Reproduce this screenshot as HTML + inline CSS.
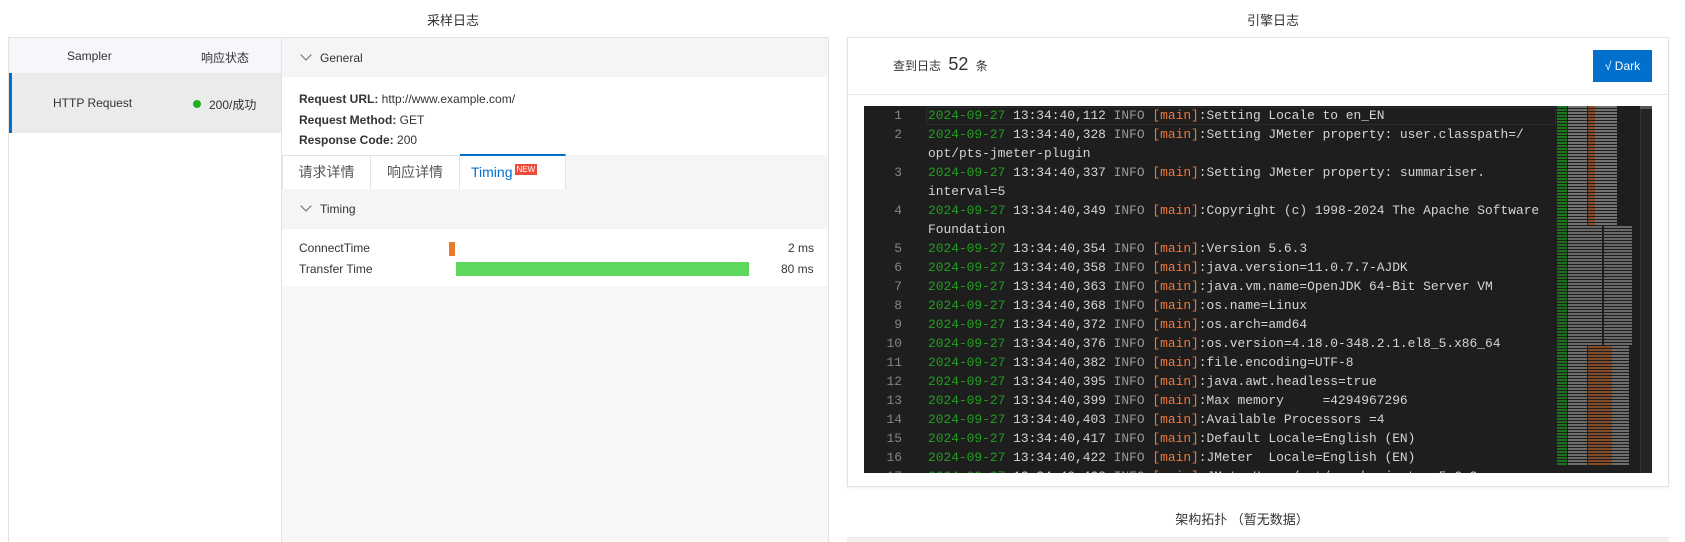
<!DOCTYPE html>
<html style="height:542px;overflow:hidden"><head><meta charset="utf-8"><style>
*{box-sizing:border-box;margin:0;padding:0}
body{width:1685px;height:542px;background:#fff;font-family:"Liberation Sans","Noto Sans CJK SC",sans-serif;font-size:12px;color:#333;position:relative;overflow:hidden}
.abs{position:absolute}
.title{font-size:13px;color:#333;transform:translateX(-50%);top:10px}
.mono{font-family:"Liberation Mono",monospace;font-size:12.9px}
.row{height:19px;line-height:19px;white-space:pre;position:relative}
.ln{position:absolute;left:0;width:38px;text-align:right;color:#858585}
.tx{position:absolute;left:64px;color:#d4d4d4}
.d{color:#1fa01f}.i{color:#9a9a9a}.m{color:#f0793a}
.chev{display:inline-block;width:8px;height:8px;border-right:1.3px solid #666;border-bottom:1.3px solid #666;transform:rotate(45deg);margin-right:10px;position:relative;top:-3px}
</style></head><body>
<div class="abs title" style="left:453px">采样日志</div>
<div class="abs title" style="left:1273px">引擎日志</div>

<div class="abs" style="left:8px;top:37px;width:821px;height:505px;border:1px solid #e3e3e3;border-bottom:none;background:#fff"></div>
<div class="abs" style="left:9px;top:38px;width:272px;height:35px;background:#f5f7fa"></div>
<div class="abs" style="left:67px;top:49px">Sampler</div>
<div class="abs" style="left:201px;top:49px">响应状态</div>
<div class="abs" style="left:9px;top:73px;width:272px;height:60px;background:#ebebeb;border-left:3px solid #0070cc"></div>
<div class="abs" style="left:53px;top:96px">HTTP Request</div>
<div class="abs" style="left:193px;top:100px;width:8px;height:8px;border-radius:50%;background:#1db11d"></div>
<div class="abs" style="left:209px;top:96px">200/成功</div>
<div class="abs" style="left:281px;top:38px;width:1px;height:504px;background:#e3e3e3"></div>

<div class="abs" style="left:282px;top:38px;width:546px;height:39px;background:#f5f5f5"></div>
<div class="abs" style="left:302px;top:51px"><span class="chev"></span>General</div>
<div class="abs" style="left:299px;top:89px;line-height:20.5px"><b>Request URL:</b> http://www.example.com/<br><b>Request Method:</b> GET<br><b>Response Code:</b> 200</div>
<div class="abs" style="left:282px;top:155px;width:546px;height:34px;background:#f5f5f5"></div>
<div class="abs" style="left:282px;top:155px;width:89px;height:34px;background:#fff;border:1px solid #e3e3e3;border-bottom:none;font-size:14px;text-align:center;line-height:32px;color:#555">请求详情</div>
<div class="abs" style="left:371px;top:155px;width:89px;height:34px;background:#fff;border:1px solid #e3e3e3;border-left:none;border-bottom:none;font-size:14px;text-align:center;line-height:32px;color:#555">响应详情</div>
<div class="abs" style="left:460px;top:154px;width:106px;height:35px;background:#fff;border-top:2px solid #0070cc;border-right:1px solid #e3e3e3;font-size:14px;line-height:32px;color:#0070cc;padding-left:11px">Timing<span style="background:#f04a3a;color:#fff;font-size:8px;padding:1px 2px;position:relative;top:-5px;margin-left:2px">NEW</span></div>
<div class="abs" style="left:282px;top:189px;width:546px;height:40px;background:#f5f5f5"></div>
<div class="abs" style="left:302px;top:202px"><span class="chev"></span>Timing</div>
<div class="abs" style="left:299px;top:241px">ConnectTime</div>
<div class="abs" style="left:299px;top:262px">Transfer Time</div>
<div class="abs" style="left:449px;top:242px;width:6px;height:14px;background:#e87b2a"></div>
<div class="abs" style="left:456px;top:262px;width:293px;height:14px;background:#5cd85c"></div>
<div class="abs" style="left:788px;top:241px">2 ms</div>
<div class="abs" style="left:781px;top:262px">80 ms</div>
<div class="abs" style="left:282px;top:286px;width:546px;height:256px;background:#f7f7f7"></div>

<div class="abs" style="left:847px;top:37px;width:822px;height:450px;border:1px solid #e3e3e3;background:#fff;box-shadow:0 1px 3px rgba(0,0,0,.06)"></div>
<div class="abs" style="left:848px;top:94px;width:820px;height:1px;background:#e6e6e6"></div>
<div class="abs" style="left:893px;top:54px;font-size:12px">查到日志 <span style="font-size:18px;margin:0 4px">52</span> 条</div>
<div class="abs" style="left:1593px;top:50px;width:59px;height:32px;background:#0070cc;color:#fff;line-height:32px;text-align:center;font-size:12px">√ Dark</div>

<div class="abs mono" style="left:864px;top:106px;width:788px;height:367px;background:#1e1e1e;overflow:hidden">
<div style="position:absolute;left:62px;top:1px;width:630px;height:18px;border:1px solid #2c2c2c"></div>
<div>
<div class="row"><span class="ln">1</span><span class="tx"><span class="d">2024-09-27</span> 13:34:40,112 <span class="i">INFO</span> <span class="m">[main]</span>:Setting Locale to en_EN</span></div>
<div class="row"><span class="ln">2</span><span class="tx"><span class="d">2024-09-27</span> 13:34:40,328 <span class="i">INFO</span> <span class="m">[main]</span>:Setting JMeter property: user.classpath=/</span></div>
<div class="row"><span class="tx">opt/pts-jmeter-plugin</span></div>
<div class="row"><span class="ln">3</span><span class="tx"><span class="d">2024-09-27</span> 13:34:40,337 <span class="i">INFO</span> <span class="m">[main]</span>:Setting JMeter property: summariser.</span></div>
<div class="row"><span class="tx">interval=5</span></div>
<div class="row"><span class="ln">4</span><span class="tx"><span class="d">2024-09-27</span> 13:34:40,349 <span class="i">INFO</span> <span class="m">[main]</span>:Copyright (c) 1998-2024 The Apache Software</span></div>
<div class="row"><span class="tx">Foundation</span></div>
<div class="row"><span class="ln">5</span><span class="tx"><span class="d">2024-09-27</span> 13:34:40,354 <span class="i">INFO</span> <span class="m">[main]</span>:Version 5.6.3</span></div>
<div class="row"><span class="ln">6</span><span class="tx"><span class="d">2024-09-27</span> 13:34:40,358 <span class="i">INFO</span> <span class="m">[main]</span>:java.version=11.0.7.7-AJDK</span></div>
<div class="row"><span class="ln">7</span><span class="tx"><span class="d">2024-09-27</span> 13:34:40,363 <span class="i">INFO</span> <span class="m">[main]</span>:java.vm.name=OpenJDK 64-Bit Server VM</span></div>
<div class="row"><span class="ln">8</span><span class="tx"><span class="d">2024-09-27</span> 13:34:40,368 <span class="i">INFO</span> <span class="m">[main]</span>:os.name=Linux</span></div>
<div class="row"><span class="ln">9</span><span class="tx"><span class="d">2024-09-27</span> 13:34:40,372 <span class="i">INFO</span> <span class="m">[main]</span>:os.arch=amd64</span></div>
<div class="row"><span class="ln">10</span><span class="tx"><span class="d">2024-09-27</span> 13:34:40,376 <span class="i">INFO</span> <span class="m">[main]</span>:os.version=4.18.0-348.2.1.el8_5.x86_64</span></div>
<div class="row"><span class="ln">11</span><span class="tx"><span class="d">2024-09-27</span> 13:34:40,382 <span class="i">INFO</span> <span class="m">[main]</span>:file.encoding=UTF-8</span></div>
<div class="row"><span class="ln">12</span><span class="tx"><span class="d">2024-09-27</span> 13:34:40,395 <span class="i">INFO</span> <span class="m">[main]</span>:java.awt.headless=true</span></div>
<div class="row"><span class="ln">13</span><span class="tx"><span class="d">2024-09-27</span> 13:34:40,399 <span class="i">INFO</span> <span class="m">[main]</span>:Max memory     =4294967296</span></div>
<div class="row"><span class="ln">14</span><span class="tx"><span class="d">2024-09-27</span> 13:34:40,403 <span class="i">INFO</span> <span class="m">[main]</span>:Available Processors =4</span></div>
<div class="row"><span class="ln">15</span><span class="tx"><span class="d">2024-09-27</span> 13:34:40,417 <span class="i">INFO</span> <span class="m">[main]</span>:Default Locale=English (EN)</span></div>
<div class="row"><span class="ln">16</span><span class="tx"><span class="d">2024-09-27</span> 13:34:40,422 <span class="i">INFO</span> <span class="m">[main]</span>:JMeter  Locale=English (EN)</span></div>
<div class="row"><span class="ln">17</span><span class="tx"><span class="d">2024-09-27</span> 13:34:40,428 <span class="i">INFO</span> <span class="m">[main]</span>:JMeterHome=/opt/apache-jmeter-5.6.3</span></div>
</div>
<div style="position:absolute;left:693px;top:0;width:82px;height:120px;background:
repeating-linear-gradient(180deg,rgba(30,30,30,0) 0 2px,#1e1e1e 2px 3px),
linear-gradient(90deg,#1c8f1c 0 10px,#1e1e1e 10px 11px,#888 11px 30px,#1e1e1e 30px 31px,#a85a2a 31px 38px,#888 38px 60px,#1e1e1e 60px);opacity:.8"></div>
<div style="position:absolute;left:693px;top:120px;width:82px;height:120px;background:
repeating-linear-gradient(180deg,rgba(30,30,30,0) 0 2px,#1e1e1e 2px 3px),
linear-gradient(90deg,#1c8f1c 0 10px,#1e1e1e 10px 11px,#888 11px 45px,#1e1e1e 45px 47px,#888 47px 75px,#1e1e1e 75px);opacity:.7"></div>
<div style="position:absolute;left:693px;top:240px;width:82px;height:120px;background:
repeating-linear-gradient(180deg,rgba(30,30,30,0) 0 2px,#1e1e1e 2px 3px),
linear-gradient(90deg,#1c8f1c 0 10px,#1e1e1e 10px 11px,#888 11px 30px,#1e1e1e 30px 31px,#a85a2a 31px 55px,#888 55px 72px,#1e1e1e 72px);opacity:.75"></div>
<div style="position:absolute;left:776px;top:0;width:12px;height:367px;background:#252526;border-left:1px solid #333"></div>
<div style="position:absolute;left:776px;top:0;width:12px;height:3px;background:#555"></div>
</div>

<div class="abs" style="left:1242px;top:509px;transform:translateX(-50%);font-size:13px;white-space:nowrap">架构拓扑 （暂无数据）</div>
<div class="abs" style="left:847px;top:537px;width:822px;height:5px;background:#f0f0f0;border-top:1px solid #e6e6e6"></div>
</body></html>
